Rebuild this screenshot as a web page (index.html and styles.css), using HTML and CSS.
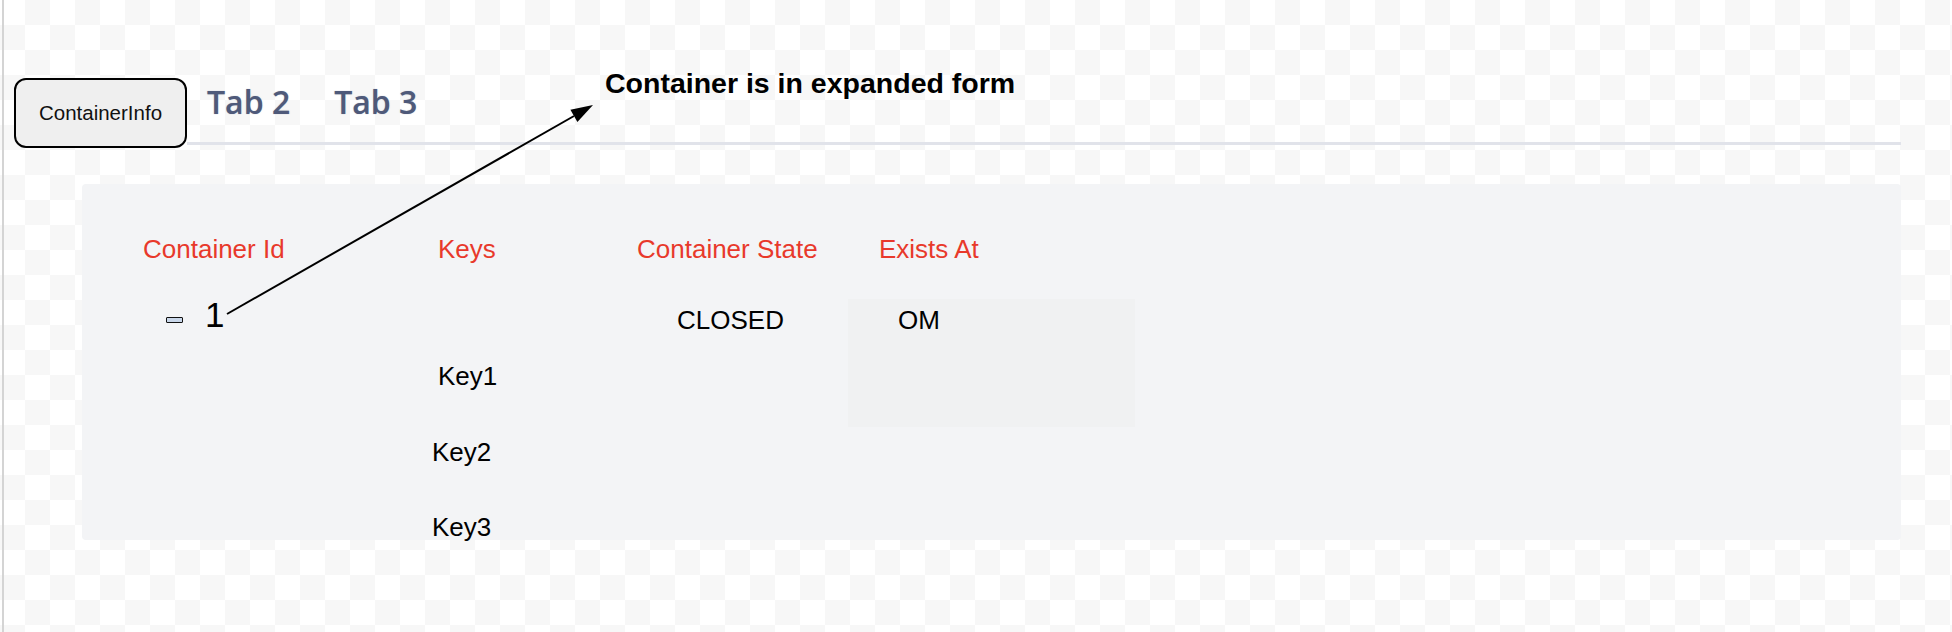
FILE: index.html
```html
<!DOCTYPE html>
<html lang="en">
<head>
<meta charset="utf-8">
<title>ContainerInfo</title>
<link rel="stylesheet" href="styles.css">
</head>
<body>
<div class="page">
  <div class="tabs-row">
    <button class="tab-active">ContainerInfo</button>
    <div class="tablist">
      <span class="tab">Tab 2</span>
      <span class="tab">Tab 3</span>
    </div>
  </div>
  <div class="panel">
    <div class="col col-id">
      <div class="th">Container Id</div>
      <div class="id-row"><span class="collapse-icon"></span><span class="id-num">1</span></div>
    </div>
    <div class="col col-keys">
      <div class="th">Keys</div>
      <div class="keys">
        <div class="key key-first">Key1</div>
        <div class="key">Key2</div>
        <div class="key">Key3</div>
      </div>
    </div>
    <div class="col col-state">
      <div class="th">Container State</div>
      <div class="state">CLOSED</div>
    </div>
    <div class="col col-exists">
      <div class="th">Exists At</div>
      <div class="om-box">OM</div>
    </div>
  </div>
</div>
<div class="annotation">Container is in expanded form</div>
<svg class="arrow" width="1952" height="632" viewBox="0 0 1952 632">
  <line x1="227" y1="314" x2="574" y2="116" stroke="#000" stroke-width="2"/>
  <polygon points="593,105 577.4,122 570.4,109.8" fill="#000"/>
</svg>
</body>
</html>
```
FILE: styles.css
```css
html, body {
  margin: 0;
  padding: 0;
}
body {
  position: relative;
  width: 1952px;
  height: 632px;
  overflow: hidden;
  background-color: #ffffff;
  background-image: conic-gradient(#f7f7f7 25%, #ffffff 0 50%, #f7f7f7 0 75%, #ffffff 0);
  background-size: 50px 50px;
  font-family: "Liberation Sans", Arial, sans-serif;
  color: #000;
}
.page {
  margin-left: 2px;
  border-left: 2px solid #d4d4d4;
  height: 632px;
  box-sizing: border-box;
  padding: 78px 51px 0 10px;
}
.tabs-row {
  display: flex;
  align-items: flex-start;
}
.tab-active {
  flex-shrink: 0;
  box-sizing: border-box;
  width: 173px;
  height: 70px;
  padding: 0;
  border: 2px solid #000;
  border-radius: 12px;
  background: #efefef;
  font-family: "Liberation Sans", Arial, sans-serif;
  font-size: 20.5px;
  color: #111;
}
.tablist {
  flex: 1;
  display: flex;
  gap: 44px;
  box-sizing: border-box;
  height: 67px;
  padding: 4px 0 0 20px;
  border-bottom: 3px solid #e1e3ea;
}
.tab {
  font-family: "Open Sans", "Noto Sans", sans-serif;
  font-weight: 600;
  font-size: 32px;
  line-height: 40px;
  color: #4f5a7a;
  text-shadow: 0 0 1px rgba(79, 90, 122, 0.5);
}
.panel {
  display: flex;
  box-sizing: border-box;
  height: 356px;
  margin: 36px 0 0 68px;
  padding-top: 45px;
  background: #f3f4f6;
  border-radius: 4px;
}
.col {
  flex-shrink: 0;
  font-size: 26px;
}
.th {
  height: 40px;
  line-height: 40px;
  font-size: 26px;
  color: #e8392b;
  white-space: nowrap;
}
.col-id { width: 300px; }
.col-id .th { padding-left: 61px; }
.id-row {
  display: flex;
  align-items: center;
  height: 50px;
  margin-top: 21px;
  padding-left: 84px;
}
.collapse-icon {
  box-sizing: border-box;
  width: 17px;
  height: 6px;
  margin-top: 10px;
  border: 1.5px solid #111;
  border-radius: 1px;
  background: #c9d7ea;
}
.id-num {
  margin-left: 22px;
  font-size: 35px;
  line-height: 50px;
}
.col-keys { width: 218px; }
.col-keys .th { padding-left: 56px; }
.keys { margin-top: 70px; }
.key {
  height: 75.5px;
  line-height: 75.5px;
  padding-left: 50px;
}
.key-first { padding-left: 56px; }
.col-state { width: 237px; }
.col-state .th { padding-left: 37px; }
.state {
  margin-top: 21px;
  height: 60px;
  line-height: 60px;
  padding-left: 77px;
}
.col-exists { width: 320px; }
.col-exists .th { padding-left: 42px; }
.om-box {
  box-sizing: border-box;
  width: 287px;
  height: 128px;
  margin: 30px 0 0 11px;
  padding-left: 50px;
  line-height: 42px;
  background: #f0f1f2;
}
.annotation {
  position: absolute;
  left: 605px;
  top: 67px;
  font-family: "Liberation Sans", Arial, sans-serif;
  font-weight: bold;
  font-size: 28.5px;
  white-space: nowrap;
}
.arrow {
  position: absolute;
  left: 0;
  top: 0;
  pointer-events: none;
}
```
